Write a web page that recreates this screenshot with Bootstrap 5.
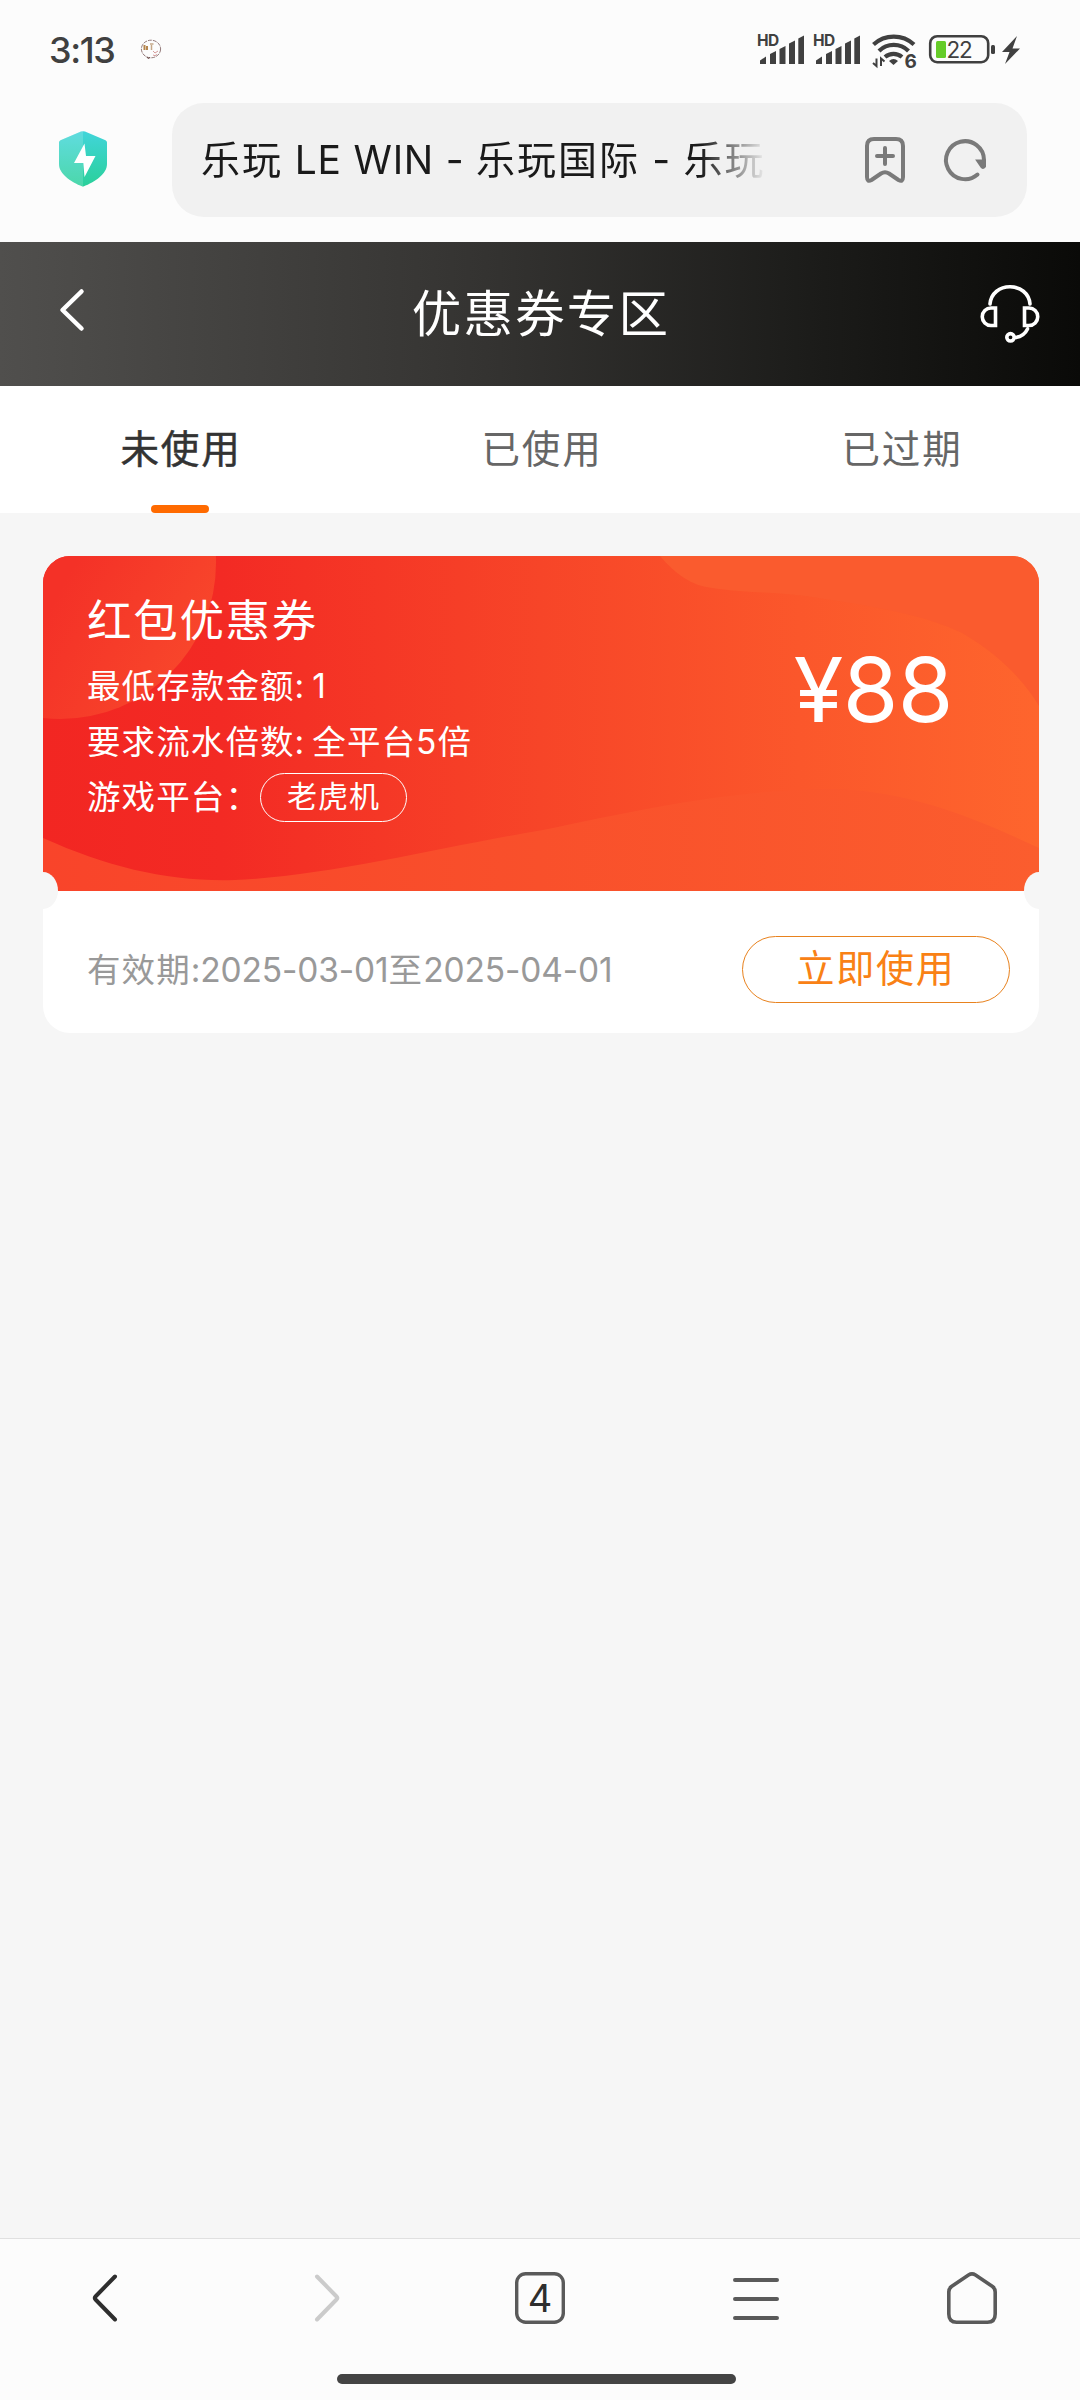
<!DOCTYPE html>
<html lang="zh-CN">
<head>
<meta charset="utf-8">
<meta name="viewport" content="width=device-width, initial-scale=1">
<title>优惠券专区</title>
<link rel="stylesheet" href="https://cdn.jsdelivr.net/npm/bootstrap@5.3.0/dist/css/bootstrap.min.css">
<style>
  body { font-family: Inter, "Noto Sans CJK SC", sans-serif; background: #f6f6f6; height: 2400px; overflow: hidden; color: #333; }
  svg { display: block; flex: none; overflow: visible; }
  .status-strip { height: 103px; background: #fcfcfc; padding: 0 60px 0 49px; }
  .status-row { height: 100px; }
  .clock-text { font-size: 36px; font-weight: 500; color: #404040; letter-spacing: -1.4px; line-height: 1; width: 92px; }
  .address-row { height: 139px; background: #fcfcfc; padding: 0 53px 25px 59px; }
  .address-row > svg { margin-top: -3px; }
  .address-pill { width: 855px; height: 114px; border-radius: 32px; background: #f1f1f1; padding: 0 41px 0 29px; }
  .address-text { width: 562px; font-size: 39px; line-height: 58px; letter-spacing: 2px; color: #1a1a1a; white-space: pre;
    -webkit-mask-image: linear-gradient(90deg, #000 500px, transparent 566px); mask-image: linear-gradient(90deg, #000 500px, transparent 566px); }
  .address-text span { letter-spacing: .75px; }
  .address-text span + span { letter-spacing: 1.2px; }
  .page-head { height: 144px; background: linear-gradient(90deg, #504f4d 0%, #343331 45%, #1c1c1a 75%, #0a0a08 100%); padding: 0 41px 0 59px; color: #fff; }
  .page-title { font-size: 49.5px; letter-spacing: 2.2px; line-height: 1; padding-top: 2px; }
  .coupon-tabs { height: 127px; background: #fff; }
  .coupon-tabs .nav-link { position: relative; height: 127px; padding: 0 0 0 4px; border-radius: 0; color: #666; font-size: 38.5px; letter-spacing: 1.8px; line-height: 126px; }
  .coupon-tabs .nav-link.active { color: #333; background: none; padding-left: 2px; -webkit-text-stroke: .5px #333; }
  .coupon-tabs .nav-link.active::after { content: ""; position: absolute; left: 50%; bottom: 0; width: 58px; height: 8px; margin-left: -29px; border-radius: 4px; background: #ff6a00; }
  .coupon { margin: 43px 41px 0 43px; border: 0; border-radius: 27px; overflow: hidden; height: 477px; background: #fff; }
  .coupon-top { position: relative; height: 335px; color: #fff; padding: 36px 86px 0 44px; }
  .coupon-art { position: absolute; inset: 0; z-index: 0; }
  .coupon-top > .coupon-info, .coupon-top > .amount { position: relative; z-index: 1; }
  .coupon-name { font-size: 44.5px; letter-spacing: 1.7px; line-height: 58px; margin-bottom: 9px; }
  .coupon-line { font-size: 33.5px; letter-spacing: 1.1px; line-height: 55.6px; white-space: pre; }
  .chip { width: 147px; height: 49px; border: 1px solid #fff; font-size: 30px; letter-spacing: 1px; line-height: 45px; text-align: center; }
  .amount { font-size: 90px; line-height: 1; margin-top: 53px; letter-spacing: -.5px; }
  .notch { position: absolute; width: 30px; height: 37px; border-radius: 50%; background: #f6f6f6; bottom: -18px; z-index: 2; }
  .notch-l { left: -15px; } .notch-r { right: -15px; }
  .coupon-foot { height: 142px; padding: 14px 29px 0 44px; }
  .validity { font-size: 33.5px; color: #999; letter-spacing: 1.1px; line-height: 50px; white-space: pre; padding-top: 1px; }
  .num { letter-spacing: -.7px; }
  .validity .num { letter-spacing: -.15px; }
  .btn-use { width: 268px; height: 67px; border: 1px solid #e8821e; color: #f98115; font-size: 38px; letter-spacing: 1.8px; line-height: 58px; padding: 0 0 3px; }
  .browser-bar { height: 162px; background: #fcfcfc; border-top: 1px solid #e0e0e0; }
  .browser-tools { height: 117px; }
  .browser-tools .col { flex: 0 0 20%; }
  .shift-back { padding-right: 6px; } .shift-forward { padding-left: 6px; }
  .home-wrap { padding: 18px 7px 0 0; }
  .home-line { width: 399px; height: 10px; border-radius: 5px; background: #444; }
</style>
<script src="https://cdn.jsdelivr.net/npm/bootstrap@5.3.0/dist/js/bootstrap.bundle.min.js"></script>
</head>
<body class="d-flex flex-column">
<header>
  <div class="status-strip">
    <div class="status-row d-flex align-items-center">
      <span class="clock-text">3:13</span>
      <svg width="20" height="20" viewBox="0 0 20 20" fill="none"><ellipse cx="10" cy="9" rx="9.6" ry="8.8" stroke="#7a5a5a" stroke-width=".8" stroke-dasharray="4 1"/><path d="M3.500 5v5M6 6v4" stroke="#b5854d" stroke-width="2"/><path d="M9 4h3.500M10.500 5v5" stroke="#c5a888" stroke-width="1.500"/><path d="M12 11l2 2 3-2M12 15q2 1.500 4-.5" stroke="#d09090" stroke-width=".9"/><path d="M6 17l1 1.500 2-1" stroke="#6b4a4a"/></svg>
      <svg class="ms-auto" width="264" height="44" viewBox="756 28 264 44" fill="#404040">
        <defs><g id="sig"><text x="757" y="46" font-family="Inter" font-size="15.5" font-weight="700" letter-spacing="-.6">HD</text>
        <path d="M760 60.500l6-4V64h-6zM770 54l6-3V64h-6zM779.500 49l6-3V64h-6zM789 43.500l6-3V64h-6zM798.300 38.500l5.700-3V64h-5.700z"/></g></defs>
        <use href="#sig"/><use href="#sig" x="56"/>
        <g fill="none" stroke="#404040" stroke-width="4.200"><path d="M873.500 44.500a30 30 0 0 1 40.500 0M879 51a21 21 0 0 1 29.500 0M885 57a13 13 0 0 1 17 0"/></g>
        <path d="M893.500 65l-4.500-4q4.500-4 9 0z"/>
        <path d="M876.500 58.500v7.500l-3.500-3M881 66v-7.500l3.500 3" fill="none" stroke="#404040" stroke-width="2"/>
        <text x="904.500" y="68" font-family="Inter" font-size="19" font-weight="700">6</text>
        <rect x="930.200" y="36.200" width="58" height="26" rx="7" fill="none" stroke="#404040" stroke-width="2.600"/>
        <rect x="936" y="41" width="10" height="17" rx="1.500" fill="#66cc28"/>
        <text x="946.500" y="58" font-family="Inter" font-size="22.500" letter-spacing="-1.300">22</text>
        <rect x="991" y="45" width="4" height="9" rx="1.500"/>
        <path d="M1017 36l-15 16h7.500l-4.500 12 15-15.500h-7.500z"/>
      </svg>
    </div>
  </div>
  <div class="address-row d-flex align-items-center justify-content-between">
    <svg width="48" height="56" viewBox="0 0 48 56"><defs><linearGradient id="sh" x1="0" y1="0" x2="0" y2="1"><stop stop-color="#41d5da"/><stop offset="1" stop-color="#2ad09a"/></linearGradient></defs>
      <path d="M22 .6Q24-.3 26 .6L46.500 9.300Q48 10 48 11.500V33C48 43 36 51 24.500 55.500Q24 55.700 23.500 55.500C12 51 0 43 0 33V11.500Q0 10 1.500 9.300z" fill="url(#sh)"/>
      <path d="M24 0Q23 0 22 .6L1.500 9.300Q0 10 0 11.500V33C0 43 12 51 24 55.600z" fill="#fff" opacity=".16"/>
      <path d="M25.500 12.500L15 32h9.300l1.200 14L36.500 25H27z" fill="#fff"/></svg>
    <div class="address-pill d-flex align-items-center">
      <div class="address-text">乐玩<span> LE WIN - </span>乐玩国际<span> - </span>乐玩</div>
      <svg class="ms-auto" width="40" height="46" viewBox="0 0 40 46" fill="none" stroke="#7a7a7a" stroke-width="4" stroke-linecap="round" stroke-linejoin="round"><path d="M2 9Q2 2 9 2H31Q38 2 38 9V40Q38 45.500 33.500 43L24 36.500Q20 34 16 36.500L6.500 43Q2 45.500 2 40zM12 19H28M20 11V27"/></svg>
      <svg width="42" height="42" viewBox="0 0 42 42" style="margin-left:39px" fill="none" stroke="#7a7a7a" stroke-width="4" stroke-linecap="round"><path d="M33.500 35.500A19 19 0 1 1 40 21"/><path d="M33 21.500H41V27.500Q39.500 30 37.500 28z" fill="#7a7a7a" stroke-width="2"/></svg>
    </div>
  </div>
</header>
<nav class="page-head d-flex align-items-center justify-content-between">
  <svg width="42" height="42" viewBox="0 0 42 42" fill="none" stroke="#fff" stroke-width="4.500" stroke-linecap="round" stroke-linejoin="round" style="margin-top:-8px"><path d="M22.500 2.500L3.500 21 22.500 39.500"/></svg>
  <div class="page-title">优惠券专区</div>
  <svg width="58" height="58" viewBox="0 0 58 58" fill="none" stroke="#fff" stroke-width="3.600" stroke-linecap="round"><path d="M9 19C10 8 19 1.800 29 1.800S48 8 49 19M14.500 23H10A8.500 8.500 0 0 0 10 40.500H14.500zM43.500 23H48A8.500 8.500 0 0 1 48 40.500H43.500zM46.500 44Q43 51.500 34.500 52.500"/><circle cx="29.500" cy="52.300" r="3.700"/></svg>
</nav>
<ul class="nav nav-pills nav-fill coupon-tabs">
  <li class="nav-item col-4"><a class="nav-link active">未使用</a></li>
  <li class="nav-item col-4"><a class="nav-link">已使用</a></li>
  <li class="nav-item col-4"><a class="nav-link">已过期</a></li>
</ul>
<main class="flex-grow-1">
  <article class="card coupon">
    <div class="coupon-top d-flex justify-content-between">
      <svg class="coupon-art" width="996" height="335" viewBox="43 556 996 335">
        <defs>
          <linearGradient id="base"><stop stop-color="#f22622"/><stop offset=".18" stop-color="#f32a24"/><stop offset=".5" stop-color="#f74528"/><stop offset=".76" stop-color="#fb572b"/><stop offset="1" stop-color="#fe652d"/></linearGradient>
          <linearGradient id="disc" gradientUnits="userSpaceOnUse" x1="60" y1="590" x2="190" y2="660"><stop stop-color="#f43127"/><stop offset="1" stop-color="#f8462b"/></linearGradient>
          <linearGradient id="wave"><stop stop-color="#f9442a"/><stop offset=".5" stop-color="#f9502b"/><stop offset="1" stop-color="#fb5d2e"/></linearGradient>
        </defs>
        <rect x="43" y="556" width="996" height="335" fill="url(#base)"/>
        <circle cx="60" cy="563" r="156" fill="url(#disc)"/>
        <path d="M43 838C110 868 170 882 235 880C330 876 440 847 543 830C650 807 740 789 833 789C910 791 975 818 1039 848V891H43z" fill="url(#wave)"/>
        <path d="M660 556C675 574 692 586 712 588C745 593 770 592 805 596C850 603 920 612 962 633C1000 655 1025 682 1039 706V556z" fill="#fa5b2e"/>
      </svg>
      <div class="coupon-info">
        <div class="coupon-name">红包优惠券</div>
        <div class="coupon-line">最低存款金额<span class="num">: 1</span></div>
        <div class="coupon-line">要求流水倍数<span class="num">: </span>全平台5倍</div>
        <div class="coupon-line d-flex align-items-center">游戏平台：<span class="chip rounded-pill">老虎机</span></div>
      </div>
      <div class="amount">¥88</div>
      <span class="notch notch-l"></span><span class="notch notch-r"></span>
    </div>
    <div class="coupon-foot d-flex align-items-center justify-content-between">
      <div class="validity">有效期<span class="num">:2025-03-01</span>至<span class="num">2025-04-01</span></div>
      <button class="btn btn-use rounded-pill">立即使用</button>
    </div>
  </article>
</main>
<footer class="browser-bar">
  <div class="browser-tools row g-0 align-items-center">
    <div class="col d-flex justify-content-center shift-back"><svg width="26" height="48" viewBox="0 0 26 48" fill="none" stroke="#2e2e2e" stroke-width="4" stroke-linecap="round" stroke-linejoin="round"><path d="M23 2.500L3.500 22.500Q2 24 3.500 25.500L23 45.500"/></svg></div>
    <div class="col d-flex justify-content-center shift-forward"><svg width="26" height="48" viewBox="0 0 26 48" fill="none" stroke="#cbcbcb" stroke-width="4" stroke-linecap="round" stroke-linejoin="round"><path d="M3 2.500L22.500 22.500Q24 24 22.500 25.500L3 45.500"/></svg></div>
    <div class="col d-flex justify-content-center"><svg width="50" height="52" viewBox="0 0 50 52"><rect x="1.700" y="1.700" width="46.600" height="48.600" rx="9" fill="none" stroke="#5a5a5a" stroke-width="3.400"/><text x="25" y="40" text-anchor="middle" font-family="Inter" font-size="38" fill="#2e2e2e">4</text></svg></div>
    <div class="col d-flex justify-content-center"><svg width="46" height="52" viewBox="0 0 46 52" stroke="#5a5a5a" stroke-width="4" stroke-linecap="round"><path d="M2 8H44M2 27H44M2 46H44"/></svg></div>
    <div class="col d-flex justify-content-center"><svg width="50" height="52" viewBox="0 0 50 52" fill="none" stroke="#5a5a5a" stroke-width="3.600"><path d="M21.500 3Q25 .8 28.500 3L45.500 14.500Q48.200 16.500 48.200 20V42Q48.200 50.200 40.500 50.200H9.500Q1.800 50.200 1.800 42V20Q1.800 16.500 4.500 14.500z"/></svg></div>
  </div>
  <div class="home-wrap d-flex justify-content-center"><div class="home-line"></div></div>
</footer>
</body>
</html>
